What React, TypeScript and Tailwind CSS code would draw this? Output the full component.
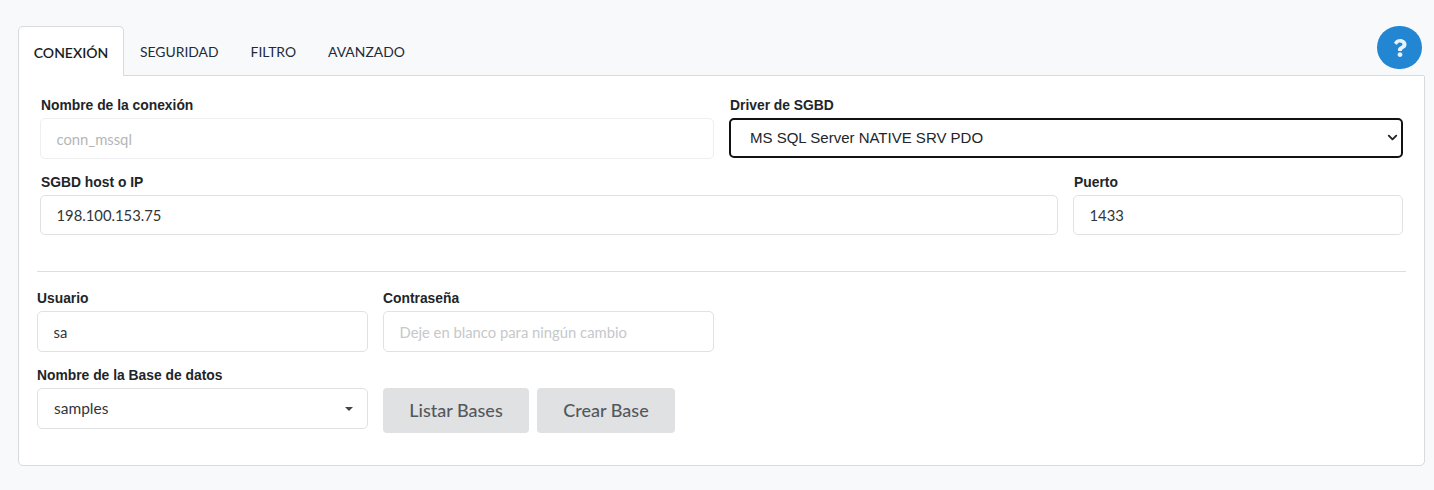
import { ChevronDown } from "lucide-react";
import { FaQuestion } from "react-icons/fa";

const labelClass =
  "block font-['Liberation_Sans',sans-serif] text-[13.85px] font-bold leading-[15px] text-[#212529] mb-[5px]";
const inputClass =
  "block w-full rounded-[5px] border bg-white px-[15.5px] font-['Lato',sans-serif] text-[14.8px] text-[#30353a] outline-none";

const Field = ({
  label,
  value,
  placeholder,
  className,
  inputClassName = "h-[41px] border-[#dfe1e4] placeholder:text-[#c6c8ca]",
  indent,
}: {
  label: string;
  value?: string;
  placeholder?: string;
  className?: string;
  inputClassName?: string;
  indent?: boolean;
}) => (
  <div className={className}>
    <label className={indent ? `${labelClass} pl-px` : labelClass}>{label}</label>
    <input
      className={`${inputClass} ${inputClassName}`}
      defaultValue={value}
      placeholder={placeholder}
    />
  </div>
);

const App = () => {
  return (
    <div className="h-[490px] bg-[#f8f9fb] pl-[18px] pr-[9px] pt-[26px] font-['Lato',sans-serif]">
      <div className="flex h-[50px] items-start justify-between">
        <div className="flex font-['Lato',sans-serif] text-[13.9px] text-[#1d2b3a]">
          <div className="relative z-10 flex h-[50px] w-[106px] items-center justify-center rounded-t-[5px] border border-b-0 border-[#d8dadd] bg-white pt-px text-[14px] font-semibold text-[#1a1d20]">
            CONEXIÓN
          </div>
          <div className="flex h-[50px] items-center px-[16px] pt-[2px]">SEGURIDAD</div>
          <div className="flex h-[50px] items-center px-[16px] pt-[2px]">FILTRO</div>
          <div className="flex h-[50px] items-center px-[16px] pt-[2px]">AVANZADO</div>
        </div>
        <button className="mr-[3px] flex h-[43px] w-[45px] items-center justify-center rounded-full bg-[#2286d3]">
          <FaQuestion className="h-[18px] w-[14px] text-[#e8f2fb]" />
        </button>
      </div>

      <div className="-mt-px h-[391px] rounded-b-[5px] rounded-tr-[2px] border border-[#d8dadd] bg-white px-[18px] pt-[22px]">
        <div className="flex flex-col gap-[16px] px-[3px]">
          <div className="flex gap-[15px]">
            <Field
              label="Nombre de la conexión"
              placeholder="conn_mssql"
              className="flex-1"
              inputClassName="h-[41px] border-[#eceef0] placeholder:text-[#b4b6b9]"
              indent
            />
            <div className="flex-1">
              <label className={`${labelClass} pl-px`}>Driver de SGBD</label>
              <div className="relative">
                <select
                  defaultValue="native"
                  className="block h-[40px] w-full appearance-none rounded-[5px] border-2 border-[#101214] bg-white pl-[19px] pr-[24px] font-['Liberation_Sans',sans-serif] text-[15px] text-[#212529] outline-none"
                >
                  <option value="native">MS SQL Server NATIVE SRV PDO</option>
                </select>
                <ChevronDown
                  className="pointer-events-none absolute right-[3px] top-[12px] h-[15px] w-[15px] text-[#212529]"
                  strokeWidth={3}
                />
              </div>
            </div>
          </div>
          <div className="flex gap-[15px]">
            <Field
              label="SGBD host o IP"
              value="198.100.153.75"
              className="flex-1"
              inputClassName="h-[40px] border-[#dfe1e4]"
              indent
            />
            <Field
              label="Puerto"
              value="1433"
              className="w-[330px]"
              inputClassName="h-[40px] border-[#dfe1e4]"
              indent
            />
          </div>
        </div>

        <hr className="mb-[19px] mt-[36px] border-t border-[#dcdee1]" />

        <div className="grid grid-cols-[331px_331px] gap-x-[15px] gap-y-[16px]">
          <Field label="Usuario" value="sa" />
          <Field label="Contraseña" placeholder="Deje en blanco para ningún cambio" />
          <div>
            <label className={labelClass}>Nombre de la Base de datos</label>
            <div className="flex h-[41px] items-center justify-between rounded-[5px] border border-[#dfe1e4] bg-white pl-[16px] pr-[14px] font-['Lato',sans-serif] text-[15.5px] text-[#30353a]">
              <span>samples</span>
              <span className="h-0 w-0 border-x-[4px] border-t-[4px] border-x-transparent border-t-[#444]" />
            </div>
          </div>
          <div className="flex gap-[8px] pt-[20px]">
            <button className="h-[45px] w-[146px] rounded-[4px] bg-[#e0e1e3] font-['Lato',sans-serif] text-[18px] font-medium text-[#54585c]">
              Listar Bases
            </button>
            <button className="h-[45px] w-[138px] rounded-[4px] bg-[#e0e1e3] font-['Lato',sans-serif] text-[18px] font-medium text-[#54585c]">
              Crear Base
            </button>
          </div>
        </div>
      </div>
    </div>
  );
};

export default App;
